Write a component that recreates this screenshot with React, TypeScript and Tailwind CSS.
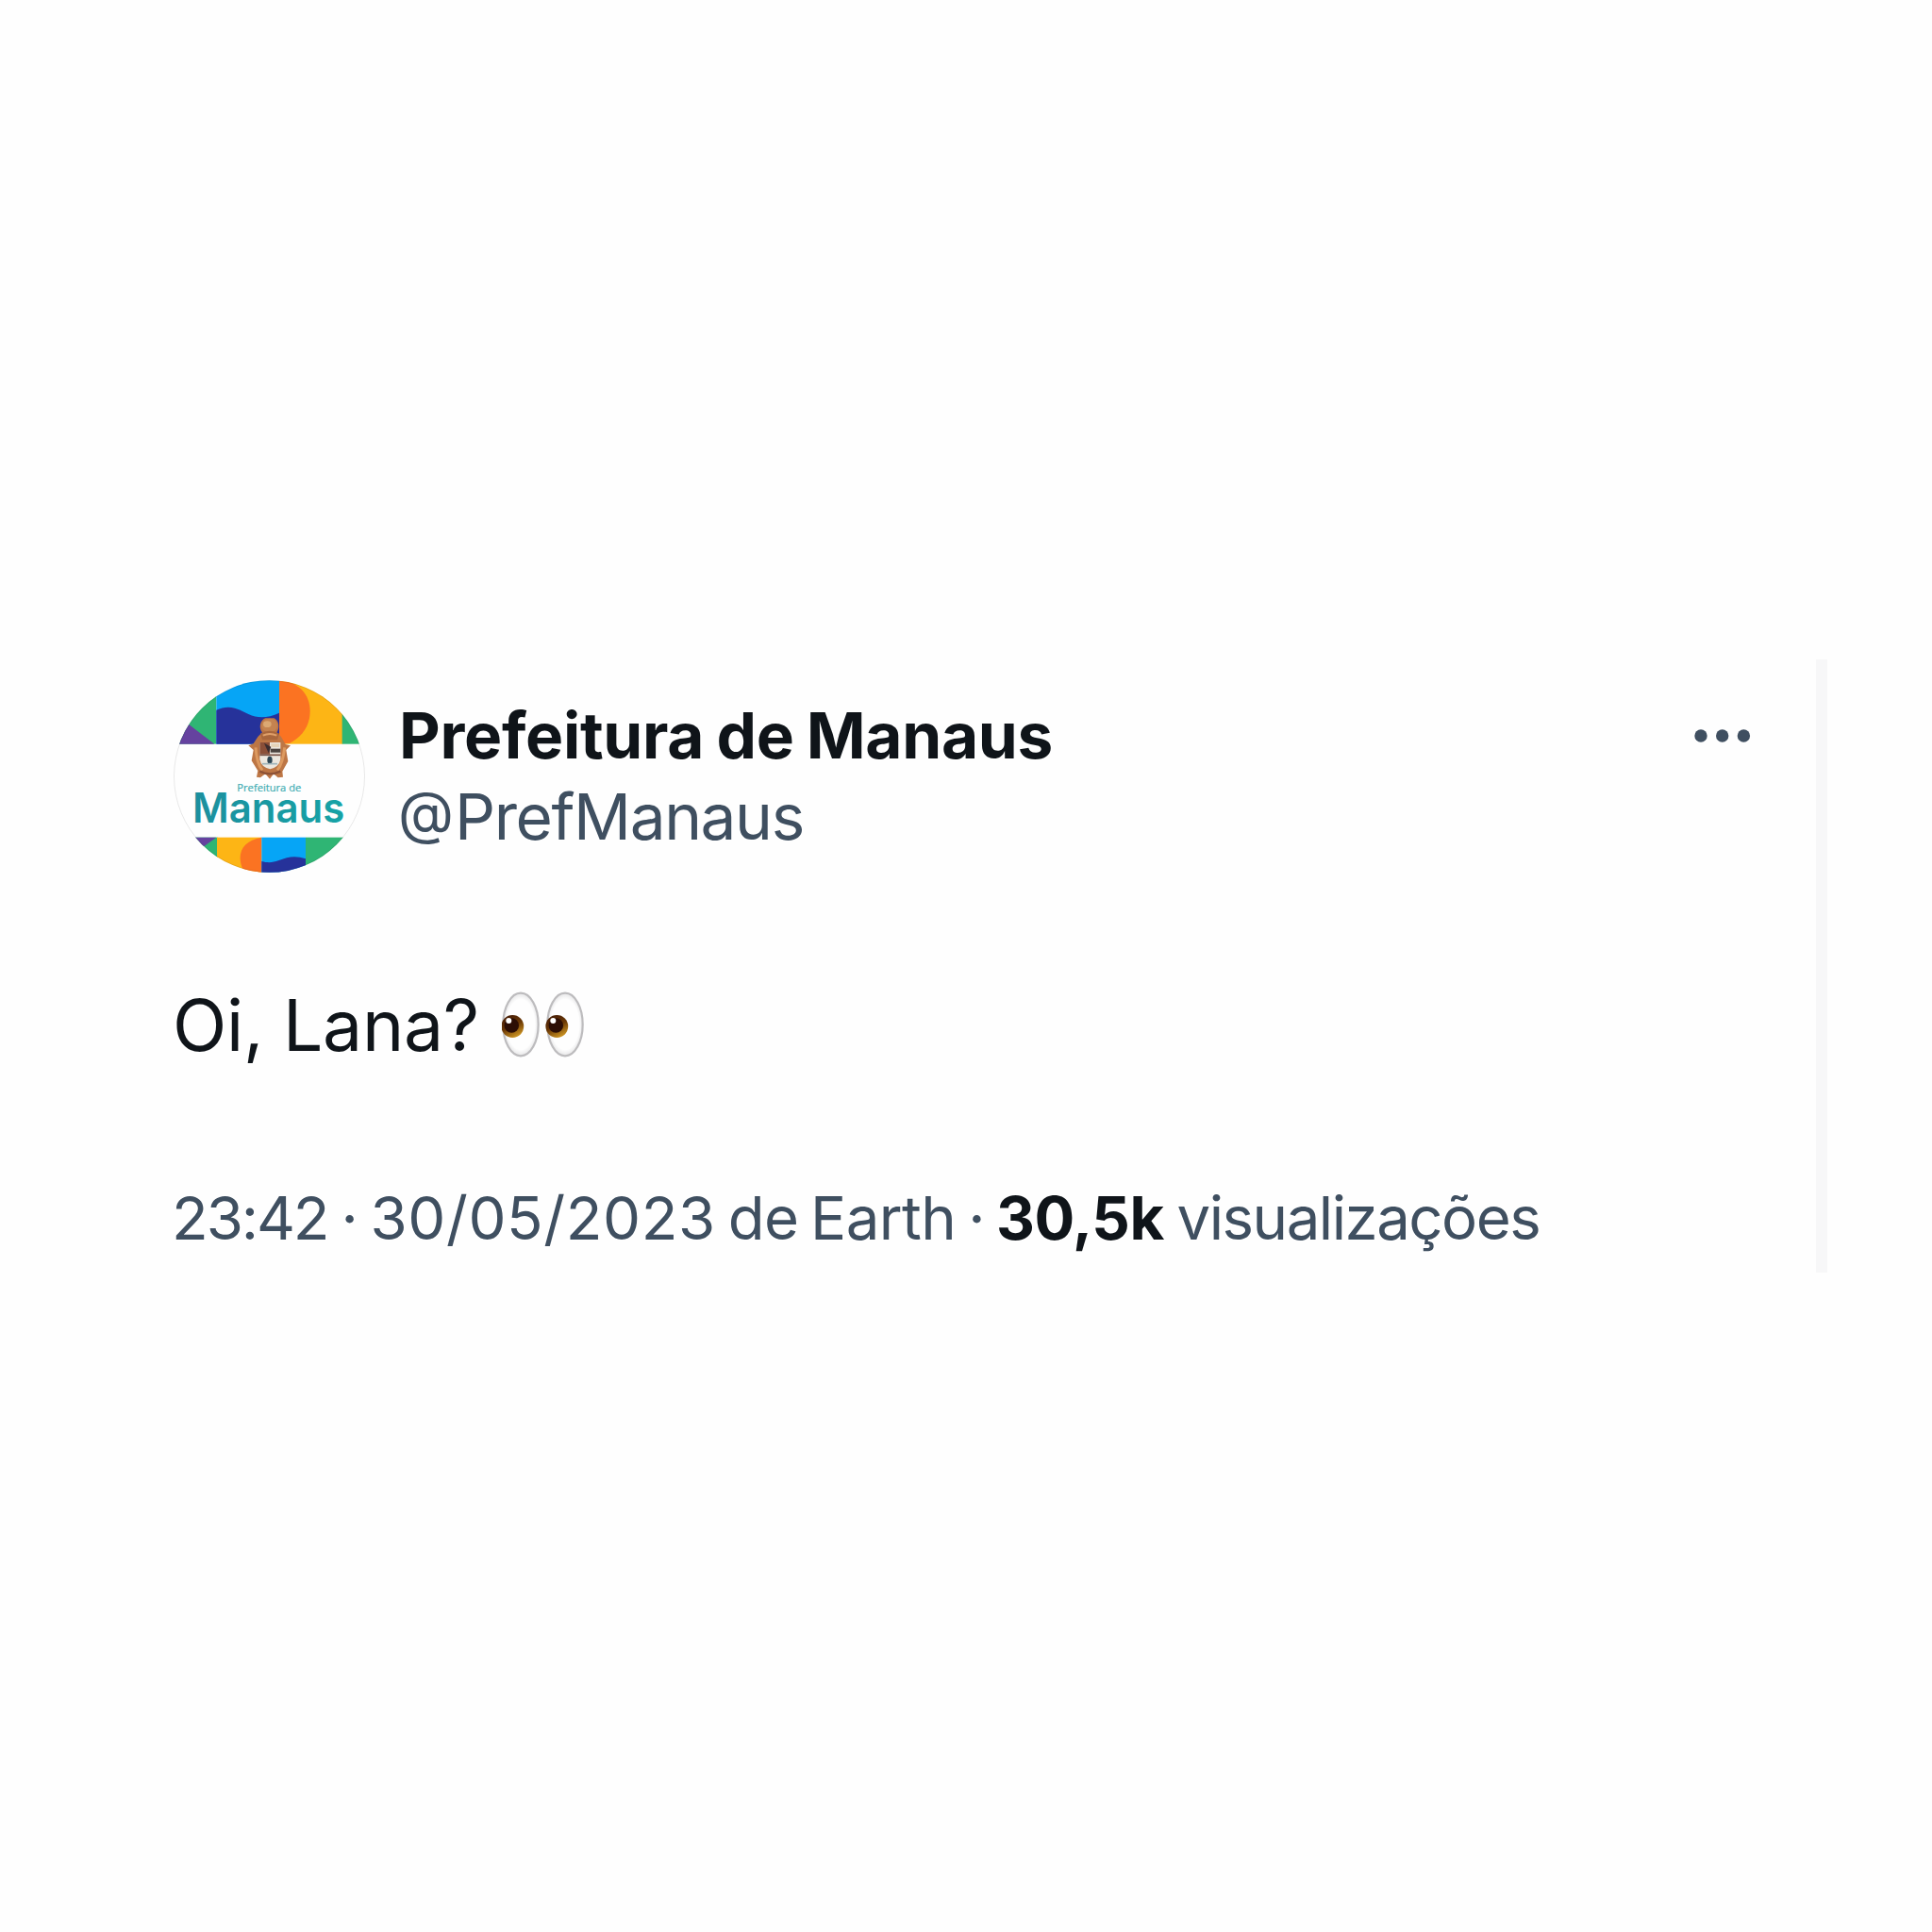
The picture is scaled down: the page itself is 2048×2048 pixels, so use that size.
function Avatar() {
  return (
    <svg viewBox="30 32 609 612" className="block h-[204px] w-[203px] shrink-0" role="img" aria-label="Prefeitura de Manaus">
      <defs>
        <clipPath id="avatar-clip">
          <ellipse cx="334.500" cy="338" rx="304" ry="305.500" />
        </clipPath>
        <linearGradient id="wordmark" x1="0" y1="0" x2="1" y2="0">
          <stop offset="0" stopColor="#1c8f9e" />
          <stop offset="1" stopColor="#16a3a6" />
        </linearGradient>
      </defs>
      <g clipPath="url(#avatar-clip)">
        <rect x="20" y="20" width="640" height="640" fill="#fefefe" />
        <rect x="20" y="20" width="146" height="215" fill="#2fb574" />
        <path d="M20 140 L78 172 L160 235 H20Z" fill="#65429f" />
        <rect x="166" y="20" width="200" height="215" fill="#06a5f6" />
        <path d="M166 127 C205 108 235 122 268 140 C300 155 330 152 366 136 V235 H166Z" fill="#26329a" />
        <rect x="366" y="20" width="202" height="215" fill="#fdb515" />
        <path d="M366 34 C425 34 464 76 464 130 C464 178 438 212 400 232 L366 235Z" fill="#fb7322" />
        <rect x="566" y="20" width="90" height="215" fill="#2fb574" />
        <rect x="20" y="532" width="150" height="120" fill="#2fb574" />
        <path d="M90 532 H166 L124 562Z" fill="#65429f" />
        <rect x="168" y="532" width="142" height="120" fill="#fdb515" />
        <path d="M310 532 C262 540 240 568 242 600 C243 622 250 636 262 650 H310Z" fill="#fb7322" />
        <rect x="310" y="532" width="140" height="120" fill="#06a5f6" />
        <path d="M310 608 C345 618 365 604 390 597 C412 591 430 594 450 600 V650 H310Z" fill="#26329a" />
        <rect x="450" y="532" width="200" height="120" fill="#2fb574" />
      </g>
      <g>
        <path d="M312 198 C300 184 304 160 322 153 H350 C366 162 368 184 358 198 L372 212 L386 236 L402 240 L388 254 L394 290 L376 322 L378 340 L362 342 L348 330 L336 346 L322 330 L306 342 L294 340 L298 320 L278 288 L284 254 L268 240 L284 234 L298 212Z" fill="#bd7645" />
        <ellipse cx="335" cy="176" rx="25" ry="22" fill="#c48350" />
        <ellipse cx="328" cy="172" rx="13" ry="10" fill="#dba873" />
        <path d="M306 202 Q334 184 366 202 L360 222 H312Z" fill="#a9673c" />
        <path d="M314 208 Q336 198 358 208" stroke="#e0a06a" strokeWidth="6" fill="none" />
        <path d="M291 246 Q294 296 312 318 M383 246 Q378 296 360 318" stroke="#dd9a60" strokeWidth="9" fill="none" />
        <path d="M304 230 H370 V284 Q366 308 337 315 Q308 308 304 284Z" fill="#ece7df" />
        <path d="M304 230 H336 V268 H304Z" fill="#8a4f38" />
        <path d="M318 232 L332 264 L340 244Z" fill="#3b2c2e" />
        <rect x="340" y="234" width="26" height="11" fill="#e4d3b8" />
        <rect x="338" y="250" width="32" height="12" fill="#4b4340" />
        <path d="M304 270 H370" stroke="#775044" strokeWidth="5" />
        <ellipse cx="336" cy="286" rx="8" ry="12" fill="#2c4554" />
        <path d="M312 298 H360" stroke="#9fb4ba" strokeWidth="5" />
        <path d="M304 322 Q336 338 370 322" stroke="#8d5236" strokeWidth="7" fill="none" />
      </g>
      <text x="232" y="385" fontSize="33" textLength="204" lengthAdjust="spacingAndGlyphs" fill="#45aeb4" stroke="#45aeb4" strokeWidth="0.600" className="font-['Open_Sans',sans-serif]">Prefeitura de</text>
      <text x="90" y="485" fontSize="133" fontWeight="600" textLength="484" lengthAdjust="spacingAndGlyphs" fill="url(#wordmark)" className="font-['Inter',sans-serif]">Manaus</text>
      <ellipse cx="334.500" cy="338" rx="303" ry="304.500" fill="none" stroke="#000" strokeOpacity="0.090" strokeWidth="3" />
    </svg>
  );
}

function Eye({ x }: { x: number }) {
  return (
    <g transform={`translate(${x} 0)`}>
      <ellipse cx="20" cy="35" rx="18.700" ry="33.300" fill="url(#eye-white)" stroke="#bdbcbe" strokeWidth="2.200" />
      <circle cx="11.300" cy="37" r="11.900" fill="url(#iris)" />
      <circle cx="10.300" cy="36" r="7.800" fill="#2c0e05" />
      <circle cx="7.300" cy="31" r="3" fill="#fff" />
    </g>
  );
}

function Eyes() {
  return (
    <svg viewBox="0 0 88 70" className="mt-[9px] ml-[24px] h-[70px] w-[88px] shrink-0" role="img" aria-label="👀">
      <defs>
        <radialGradient id="eye-white">
          <stop offset="0.800" stopColor="#fefefe" />
          <stop offset="1" stopColor="#e6e6e7" />
        </radialGradient>
        <linearGradient id="iris" x1="0.200" y1="0" x2="0.700" y2="1">
          <stop offset="0" stopColor="#441b06" />
          <stop offset="0.500" stopColor="#6b3906" />
          <stop offset="1" stopColor="#d39b25" />
        </linearGradient>
      </defs>
      <Eye x={0} />
      <Eye x={47} />
    </svg>
  );
}

function MoreIcon() {
  return (
    <svg viewBox="0 0 60 14" className="mt-[74px] h-[14px] w-[60px] shrink-0" fill="#3f4f60" role="img" aria-label="Mais">
      <circle cx="7" cy="7" r="6.700" />
      <circle cx="29.700" cy="7" r="6.700" />
      <circle cx="52.400" cy="7" r="6.700" />
    </svg>
  );
}

export default function App() {
  return (
    <main className="flex h-[2048px] w-[2048px] flex-col bg-[#fefefe] pt-[699px] font-['Inter',sans-serif] whitespace-nowrap">
      <article className="mr-[111px] h-[650px] border-r-[12px] border-[#f7f7f8] pl-[184px]">
        <header className="flex items-start pr-[69px]">
          <div className="pt-[22px]">
            <Avatar />
          </div>
          <div className="ml-[36px] flex flex-1 flex-col items-start pt-[38px]">
            <h1 className="h-[86px] text-[67.500px] leading-[86px] font-bold tracking-[-0.300px] text-[#0f1419] [word-spacing:-2.500px]">Prefeitura de Manaus</h1>
            <p className="flex h-[86px] items-baseline text-[67.500px] leading-[86px] tracking-[-1.400px] text-[#3f4f60]">
              <span className="relative -top-[7px] -left-px text-[61px] tracking-[0px]">@</span>
              <span>PrefManaus</span>
            </p>
          </div>
          <MoreIcon />
        </header>
        <p className="mt-[117px] flex h-[90px] items-start text-[75px] leading-[90px] tracking-[-0.300px] text-[#0f1419]">
          <span className="-ml-px">Oi, Lana?</span>
          <Eyes />
        </p>
        <p className="mt-[121px] -ml-[2px] h-[76px] text-[63.500px] leading-[76px] text-[#3f4f60]">
          <span className="tracking-[-2.100px]">23:42</span>
          <span className="tracking-[-1.500px] [word-spacing:-2.300px]"> · </span>
          <span className="tracking-[0.600px]">30/05/2023</span>
          <span className="tracking-[-0.600px] [word-spacing:-4.500px]"> de Earth</span>
          <span className="tracking-[-1.500px] [word-spacing:-3.300px]"> · </span>
          <strong className="font-bold tracking-[-0.500px] text-[#0f1419]">30,5k</strong>
          <span className="tracking-[-1.500px] [word-spacing:-2.600px]"> visualizações</span>
        </p>
      </article>
    </main>
  );
}
